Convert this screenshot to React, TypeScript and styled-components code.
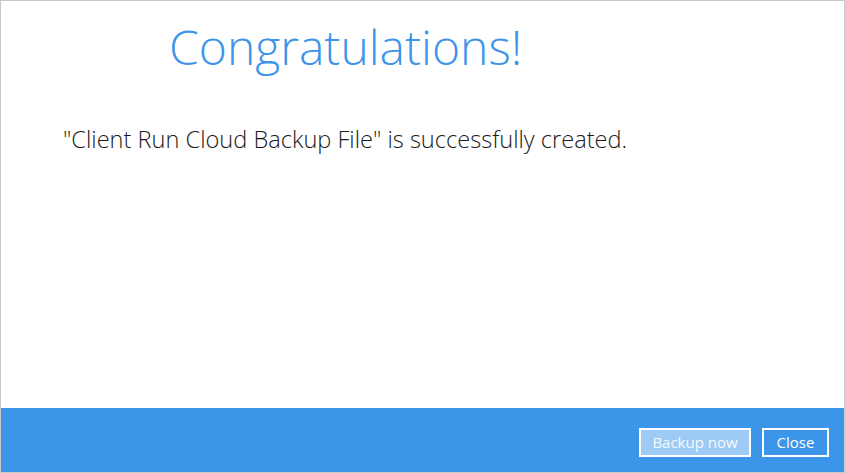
import React from "react";
import styled, { createGlobalStyle } from "styled-components";

const Global = createGlobalStyle`
  html, body { margin: 0; padding: 0; background: #ffffff; }
  body { font-family: "Open Sans", "Liberation Sans", sans-serif; }
`;

const Window = styled.div`
  box-sizing: border-box;
  width: 845px;
  height: 473px;
  border: 1px solid #c8c8c8;
  display: flex;
  flex-direction: column;
  background: #ffffff;
`;

const Content = styled.main`
  flex: 1;
  display: flex;
  flex-direction: column;
`;

const Title = styled.h1`
  margin: 14px 0 0 168px;
  font-family: "Open Sans", sans-serif;
  font-weight: 300;
  font-size: 48px;
  line-height: 64px;
  color: #3d94e9;
  letter-spacing: 0;
`;

const Message = styled.p`
  margin: 44px 0 0 62px;
  font-family: "Open Sans", sans-serif;
  font-weight: 300;
  font-size: 23.6px;
  line-height: 32px;
  color: #1a1a1a;
`;

const Footer = styled.footer`
  height: 64px;
  background: #3b96ea;
  display: flex;
  align-items: flex-start;
  justify-content: flex-end;
  gap: 11px;
  padding: 20px 15px 0 0;
  box-sizing: border-box;
`;

const Button = styled.button<{ $light?: boolean }>`
  box-sizing: border-box;
  height: 29px;
  padding: 0;
  border: 2px solid #ffffff;
  background: ${(p) => (p.$light ? "#9ecbf5" : "#3b96ea")};
  color: ${(p) => (p.$light ? "#f4f9fe" : "#ffffff")};
  font-family: "Open Sans", sans-serif;
  font-weight: 500;
  font-size: 15px;
  line-height: 25px;
  cursor: pointer;
`;

export default function App() {
  return (
    <>
      <Global />
      <Window>
        <Content>
          <Title>Congratulations!</Title>
          <Message>"Client Run Cloud Backup File" is successfully created.</Message>
        </Content>
        <Footer>
          <Button $light style={{ width: 112 }}>Backup now</Button>
          <Button style={{ width: 67 }}>Close</Button>
        </Footer>
      </Window>
    </>
  );
}
